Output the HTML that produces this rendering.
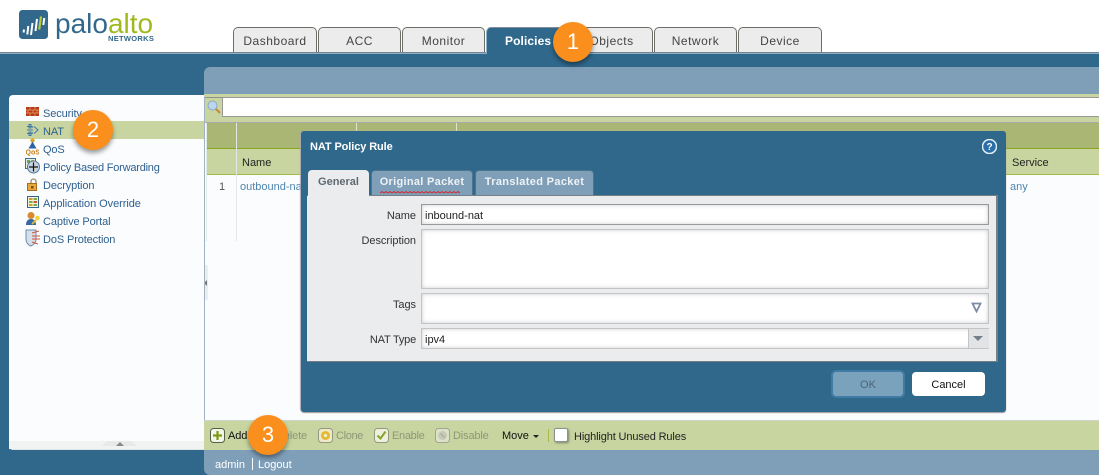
<!DOCTYPE html>
<html><head><meta charset="utf-8"><style>
html,body{margin:0;padding:0}
body{width:1099px;height:475px;overflow:hidden;position:relative;background:#30688c;font-family:"Liberation Sans",sans-serif;font-size:11px;color:#222}
div,span,svg{position:absolute}
.t{white-space:nowrap;line-height:14px}
.tab{top:27px;height:25px;width:83px;background:#ececec;border:1px solid #6e6e68;border-bottom:0;border-radius:5px 5px 0 0;box-sizing:border-box;text-align:center;font-size:12px;line-height:27px;color:#444;letter-spacing:.5px}
.side{left:43px;color:#2f6190;font-size:11px;letter-spacing:-.12px}
.inp{background:#fff;border:1px solid #c4c4c4;box-sizing:border-box;box-shadow:inset 0 0 4px #ccc}
.lab{color:#333;right:683px;font-size:11px;letter-spacing:-.05px}
.c{width:40px;height:40px;border-radius:50%;background:#fb8f1d;box-shadow:0 3px 5px rgba(0,0,0,.4);color:#fff;font-size:22px;line-height:40px;text-align:center}
.g{color:#8f9678;letter-spacing:-.15px}
</style></head><body>
<div style="left:0;top:0;width:1099px;height:52px;background:#fff"></div>
<div style="left:0;top:52px;width:1099px;height:1px;background:#77838c"></div>
<div style="left:0;top:53px;width:1099px;height:1px;background:#8db0cb"></div>

<svg style="left:19px;top:10px" width="29" height="29" viewBox="0 0 29 29"><rect width="29" height="29" rx="3.5" fill="#31688c"/><g stroke="#fff" stroke-width="2" fill="none"><path d="M5 19.5l-.4 3M9.300 16l-1 8.500M13.500 13l-1.500 12"/><path d="M18 9l-1.500 12"/></g><path d="M22 6.500l-1.800 13" stroke="#b4cb3b" stroke-width="2.200"/><path d="M25.300 8l-1 7" stroke="#fff" stroke-width="2"/></svg>
<div class="t" style="left:55px;top:5px;font-size:28px;line-height:38px;color:#31688c">palo<span style="position:static;color:#9fba1e">alto</span></div>
<div class="t" style="left:108px;top:33px;font-size:7.500px;line-height:12px;color:#31688c;font-weight:bold;letter-spacing:.3px">NETWORKS</div>

<div class="tab" style="left:233px;width:84px">Dashboard</div>
<div class="tab" style="left:318px">ACC</div>
<div class="tab" style="left:402px">Monitor</div>
<div class="tab" style="left:486px;height:27px;background:#30688c;color:#fff;font-weight:bold;border-color:#8db0cb;border-top-color:#7f8e99;letter-spacing:.1px;text-align:left;padding-left:18px;border-bottom:0">Policies</div>
<div class="tab" style="left:570px">Objects</div>
<div class="tab" style="left:654px">Network</div>
<div class="tab" style="left:738px;width:84px">Device</div>

<!-- sidebar -->
<div style="left:9px;top:95px;width:200px;height:355px;background:#fbfcfd;border-radius:4px;border-bottom:1px solid #dfe4e6;box-sizing:border-box"></div>
<div style="left:9px;top:121px;width:196px;height:18px;background:#c9d5a0"></div>
<div style="left:9px;top:441px;width:196px;height:8px;background:#f1f3f3"></div>
<div style="left:102px;top:441px;width:35px;height:5px;background:#e8eae8;clip-path:polygon(5px 0,30px 0,100% 100%,0 100%)"></div>
<div style="left:116px;top:442px;border:4px solid transparent;border-top:0;border-bottom:4px solid #888"></div>

<svg style="left:26px;top:107px" width="13" height="9" viewBox="0 0 13 9"><rect width="13" height="9" fill="#b53a1a"/><path d="M0 3h13M0 6h13M4 0v3M9 0v3M2 3v3M7 3v3M11 3v3M4 6v3M9 6v3" stroke="#ec9b60" stroke-width=".8"/></svg>
<svg style="left:26px;top:124px" width="13" height="12" viewBox="0 0 13 12" fill="none" stroke="#3d78a8" stroke-width="1"><path d="M1 2.500h5l1 1M1 6h6M1 9.500h5l1-1M8 2.500l4 3.500-4 3.500"/><path d="M3 .5h2v3.500h-2zM3 8h2v3.500h-2z"/></svg>
<svg style="left:26px;top:138px" width="13" height="18" viewBox="0 0 13 18"><circle cx="6.500" cy="2.500" r="2.200" fill="#e5a524"/><path d="M2.500 10.500l4-7 4 7z" fill="#2d62a3"/><text x="-.5" y="16.500" font-size="7" font-weight="bold" fill="#c9811a" font-family="Liberation Sans">QoS</text></svg>
<svg style="left:25px;top:158px" width="18" height="18" viewBox="0 0 18 18"><rect x=".5" y=".5" width="10" height="10" fill="#e6eee0" stroke="#3f6f96"/><rect x="2" y="2" width="3" height="3" fill="#6aa84f"/><rect x="6" y="2" width="3" height="3" fill="#d9a02f"/><circle cx="8.500" cy="9" r="6" fill="#c8d3de" stroke="#51789c"/><path d="M8.500 4.500v9M4 9h9" stroke="#111" stroke-width="1.200"/></svg>
<svg style="left:27px;top:178px" width="12" height="13" viewBox="0 0 12 13"><path d="M4 6V3.500a2.500 2.500 0 0 1 5 0V5" fill="none" stroke="#9a8b6a" stroke-width="1.300"/><rect x=".5" y="5.500" width="9" height="7" fill="#e7a93a" stroke="#a86d1c"/><rect x="4" y="8" width="2.500" height="2.500" fill="#7a4d12"/></svg>
<svg style="left:27px;top:196px" width="12" height="12" viewBox="0 0 12 12"><rect x=".5" y=".5" width="11" height="11" fill="#f2f2e0" stroke="#34688f"/><rect x="2" y="2" width="3.500" height="2" fill="#d99a2b"/><rect x="6.500" y="2" width="3.500" height="2" fill="#7cab4e"/><rect x="2" y="5" width="3.500" height="2" fill="#7cab4e"/><rect x="6.500" y="5" width="3.500" height="2" fill="#d6562b"/><rect x="2" y="8" width="3.500" height="2" fill="#d99a2b"/><rect x="6.500" y="8" width="3.500" height="2" fill="#7cab4e"/></svg>
<svg style="left:25px;top:211px" width="16" height="16" viewBox="0 0 16 16"><circle cx="6" cy="4.500" r="3.500" fill="#d98a2c"/><path d="M1 14c0-4 2-6 5-6s5 2 5 6z" fill="#3567a6"/><circle cx="12.500" cy="7" r="2.300" fill="#f1d33f"/><path d="M11 9l-4 4" stroke="#e0bd2e" stroke-width="1.800"/></svg>
<svg style="left:25px;top:229px" width="16" height="18" viewBox="0 0 16 18"><path d="M1 1h10v9c0 4-3 6-5 7-3-1-5-3-5-7z" fill="#d5dfea" stroke="#6b8bb5"/><path d="M7 4l7-2M7 7h8M7 10h8M7 13l6 2" stroke="#d4553a" stroke-width="1.100"/></svg>

<div class="t side" style="top:107px">Security</div>
<div class="t side" style="top:125px">NAT</div>
<div class="t side" style="top:143px">QoS</div>
<div class="t side" style="top:161px;letter-spacing:-.22px">Policy Based Forwarding</div>
<div class="t side" style="top:179px">Decryption</div>
<div class="t side" style="top:197px;letter-spacing:-.06px">Application Override</div>
<div class="t side" style="top:215px">Captive Portal</div>
<div class="t side" style="top:233px">DoS Protection</div>

<!-- main panel -->
<div style="left:204px;top:67px;width:895px;height:408px;background:#7f9fb9;border-radius:6px 0 0 6px"></div>
<div style="left:204px;top:94px;width:895px;height:3px;background:#c9d5a0"></div>
<div style="left:204px;top:97px;width:895px;height:26px;background:#c9d5a0;border-top:1px solid #8d938a;box-sizing:border-box"></div>
<div style="left:222px;top:97px;width:877px;height:20px;background:#fff;border:1px solid #999;border-right:0;box-sizing:border-box"></div>
<svg style="left:207px;top:100px" width="14" height="14" viewBox="0 0 14 14"><circle cx="5.500" cy="5.500" r="4.500" fill="#bcd6f0" stroke="#8aa6c2"/><path d="M9 9l4 4" stroke="#c48a3a" stroke-width="2"/></svg>
<div style="left:222px;top:116px;width:877px;height:1px;background:#999"></div>
<div style="left:204px;top:122px;width:895px;height:1px;background:#aaa"></div>
<!-- body -->
<div style="left:205px;top:123px;width:894px;height:298px;background:#fbfcfd"></div>
<div style="left:206px;top:123px;width:893px;height:26px;background:#a9b674"></div>
<div style="left:206px;top:148px;width:893px;height:1px;background:#8ea51f"></div>
<div style="left:206px;top:149px;width:893px;height:26px;background:#c9d5a0"></div>
<div style="left:206px;top:174px;width:893px;height:1px;background:#a6b94a"></div>
<div style="left:236px;top:123px;width:1px;height:118px;background:#e4e8e4"></div>
<div style="left:206px;top:123px;width:1px;height:118px;background:#e4e8e4"></div>
<div style="left:356px;top:123px;width:1px;height:26px;background:#dfe4cf"></div>
<div style="left:456px;top:123px;width:1px;height:26px;background:#dfe4cf"></div>
<div class="t" style="left:242px;top:156px;color:#222">Name</div>
<div class="t" style="left:1012px;top:156px;color:#222">Service</div>
<div class="t" style="left:219px;top:180px;color:#555">1</div>
<div class="t" style="left:240px;top:180px;color:#4f86ae">outbound-nat</div>
<div class="t" style="left:1010px;top:180px;color:#4f86ae">any</div>
<div style="left:204px;top:265px;width:4px;height:35px;background:#eceeee"></div>
<div style="left:204px;top:280px;border:3px solid transparent;border-left:0;border-right:3px solid #777"></div>
<div style="left:204px;top:97px;width:1px;height:353px;background:#9fb3c4"></div>

<!-- bottom toolbar -->
<div style="left:204px;top:421px;width:895px;height:29px;background:#c9d5a0"></div>
<div style="left:204px;top:420px;width:895px;height:1px;background:#cfd3d0"></div>
<svg style="left:210px;top:428px" width="15" height="15" viewBox="0 0 15 15"><rect x=".5" y=".5" width="14" height="14" rx="3" fill="#f3f5e6" stroke="#555f45"/><path d="M7.500 3v9M3 7.500h9" stroke="#7c9a12" stroke-width="2.200"/></svg>
<div class="t" style="left:228px;top:429px;color:#111;letter-spacing:-.1px">Add</div>
<div class="t g" style="left:270px;top:429px;padding-left:0;width:37px;text-align:right">Delete</div>
<svg style="left:318px;top:428px" width="15" height="15" viewBox="0 0 15 15"><rect x=".5" y=".5" width="14" height="14" rx="3" fill="#eee9c7" stroke="#939880"/><circle cx="7.500" cy="7.500" r="4.500" fill="#e5b92f"/><circle cx="7.500" cy="7.500" r="1.800" fill="#eee9c7"/></svg>
<div class="t g" style="left:336px;top:429px;letter-spacing:-.35px">Clone</div>
<svg style="left:374px;top:428px" width="15" height="15" viewBox="0 0 15 15"><rect x=".5" y=".5" width="14" height="14" rx="3" fill="#eef0dc" stroke="#939880"/><path d="M3.500 7.500l3 3 5-7" stroke="#85a32d" stroke-width="2" fill="none"/></svg>
<div class="t g" style="left:392px;top:429px;letter-spacing:-.3px">Enable</div>
<svg style="left:435px;top:428px" width="15" height="15" viewBox="0 0 15 15"><rect x=".5" y=".5" width="14" height="14" rx="3" fill="#dde2c6" stroke="#a0a690"/><circle cx="7.500" cy="7.500" r="4.500" fill="#c5c9b6"/><path d="M5.500 5.500l4 4" stroke="#a0a690"/></svg>
<div class="t g" style="left:453px;top:429px">Disable</div>
<div class="t" style="left:502px;top:429px;color:#111">Move</div>
<div style="left:533px;top:435px;border:3px solid transparent;border-top:3px solid #222;border-bottom:0"></div>
<div style="left:548px;top:429px;width:1px;height:13px;background:#a6b94a"></div>
<div style="left:554px;top:428px;width:14px;height:14px;background:#fff;border:1px solid #8d938a;border-radius:2px;box-sizing:border-box;box-shadow:1px 1px 2px #7a8270"></div>
<div class="t" style="left:574px;top:430px;color:#222;letter-spacing:-.13px">Highlight Unused Rules</div>
<div class="t" style="left:215px;top:458px;color:#fff">admin</div>
<div style="left:252px;top:458px;width:1px;height:12px;background:#fff"></div>
<div class="t" style="left:258px;top:458px;color:#fff">Logout</div>

<!-- dialog -->
<div style="left:301px;top:131px;width:705px;height:281px;background:#30688c;border-radius:3px;box-shadow:0 1px 1px #999,-1px 0 1px #aab"></div>
<div class="t" style="left:310px;top:140px;color:#fff;font-weight:bold;font-size:11px;letter-spacing:-.1px">NAT Policy Rule</div>
<svg style="left:982px;top:139px" width="15" height="15" viewBox="0 0 15 15"><circle cx="7.500" cy="7.500" r="7" fill="#2a6fa8" stroke="#e6eef5" stroke-width="1.500"/><text x="7.500" y="11" font-size="10" font-weight="bold" fill="#fff" text-anchor="middle" font-family="Liberation Sans">?</text></svg>
<div style="left:307px;top:195px;width:691px;height:167px;background:#ebecee;border:1px solid #777f86;border-width:1px 2px 1px 0;box-sizing:border-box"></div>
<div class="t" style="left:308px;top:170px;width:61px;height:27px;background:#ebecee;border-radius:4px 4px 0 0;text-align:center;font-weight:bold;color:#5e6a72;line-height:25px">General</div>
<div class="t" style="left:371px;top:170px;width:102px;height:25px;background:#7f9fb9;border:1px solid #4d7590;border-bottom:0;border-radius:4px 4px 0 0;box-sizing:border-box;text-align:center;font-weight:bold;color:#eef2f5;line-height:23px;letter-spacing:.3px">Original Packet</div>
<svg style="left:380px;top:191px" width="85" height="3" viewBox="0 0 85 3"><path d="M0 2l2-1.500 2 1.500 2-1.500 2 1.500 2-1.500 2 1.500 2-1.500 2 1.500 2-1.500 2 1.500 2-1.500 2 1.500 2-1.500 2 1.500 2-1.500 2 1.500 2-1.500 2 1.500 2-1.500 2 1.500 2-1.500 2 1.500 2-1.500 2 1.500 2-1.500 2 1.500 2-1.500 2 1.500 2-1.500 2 1.500 2-1.500 2 1.500 2-1.500 2 1.500 2-1.500 2 1.500 2-1.500 2 1.500 2-1.500 2 1.500" fill="none" stroke="#d8232a" stroke-width=".8"/></svg>
<div class="t" style="left:475px;top:170px;width:119px;height:25px;background:#7f9fb9;border:1px solid #4d7590;border-bottom:0;border-radius:4px 4px 0 0;box-sizing:border-box;text-align:center;font-weight:bold;color:#eef2f5;line-height:23px;letter-spacing:.35px">Translated Packet</div>

<div class="t lab" style="top:209px">Name</div>
<div class="inp" style="left:421px;top:204px;width:568px;height:21px;border-color:#999"></div>
<div class="t" style="left:425px;top:209px;color:#222">inbound-nat</div>
<div class="t lab" style="top:234px">Description</div>
<div class="inp" style="left:421px;top:229px;width:568px;height:60px"></div>
<div class="t lab" style="top:298px">Tags</div>
<div class="inp" style="left:421px;top:293px;width:568px;height:31px"></div>
<svg style="left:971px;top:302px" width="11" height="11" viewBox="0 0 11 11"><path d="M1.500 1.500h8l-4 8z" fill="#fff" stroke="#7d8ba6" stroke-width="1.800"/></svg>
<div class="t lab" style="top:333px;letter-spacing:-.2px">NAT Type</div>
<div class="inp" style="left:421px;top:328px;width:568px;height:21px"></div>
<div style="left:968px;top:329px;width:20px;height:19px;background:#e2e3e4;border-left:1px solid #c4c4c4"></div>
<div style="left:973px;top:336px;border:5px solid transparent;border-top:5px solid #72808c;border-bottom:0"></div>
<div class="t" style="left:425px;top:333px;color:#222">ipv4</div>

<div style="left:831px;top:370px;width:74px;height:28px;background:#7aa2bd;border:2px solid #3f7ba3;border-radius:5px;box-sizing:border-box;text-align:center;line-height:26px;color:#4d6373">OK</div>
<div style="left:912px;top:372px;width:73px;height:24px;background:#fff;border-radius:4px;text-align:center;line-height:26px;color:#111">Cancel</div>

<div class="c" style="left:553px;top:22px">1</div>
<div class="c" style="left:73px;top:110px">2</div>
<div class="c" style="left:248px;top:415px">3</div>
</body></html>
